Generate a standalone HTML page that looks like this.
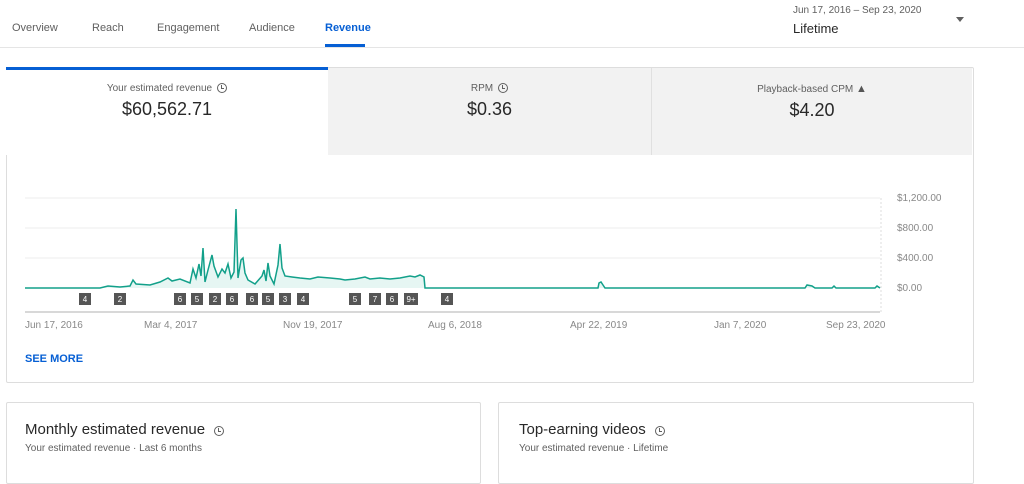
<!DOCTYPE html>
<html><head><style>
body{margin:0;width:1024px;height:470px;overflow:hidden;background:#fff;font-family:"Liberation Sans",sans-serif;position:relative;color:#282828}
.a{position:absolute}
.tab{position:absolute;top:22px;font-size:11px;color:#606060}
.card{position:absolute;border:1px solid #ddd;border-radius:2px;background:#fff}
.lbl{font-size:10px;color:#606060;text-align:center}
.val{font-size:18px;color:#282828;text-align:center;margin-top:5px}
.clk{display:inline-block;width:8px;height:8px;border:1px solid #606060;border-radius:50%;vertical-align:-2px;margin-left:5px;position:relative}
.clk:after{content:"";position:absolute;left:3px;top:1px;width:2px;height:3px;border-left:1px solid #606060;border-bottom:1px solid #606060}
.ax{font-size:10px;color:#888;position:absolute}
</style></head><body>
<div class="tab" style="left:12px">Overview</div>
<div class="tab" style="left:92px">Reach</div>
<div class="tab" style="left:157px">Engagement</div>
<div class="tab" style="left:249px">Audience</div>
<div class="tab" style="left:325px;color:#065fd4;font-weight:bold">Revenue</div>
<div class="a" style="left:325px;top:44px;width:40px;height:3px;background:#065fd4"></div>
<div class="a" style="left:0;top:47px;width:1024px;height:1px;background:#e5e5e5"></div>
<div class="a" style="left:793px;top:5px;font-size:10px;color:#606060">Jun 17, 2016 – Sep 23, 2020</div>
<div class="a" style="left:793px;top:21px;font-size:13px;color:#282828">Lifetime</div>
<div class="a" style="left:956px;top:17px;width:0;height:0;border-left:4px solid transparent;border-right:4px solid transparent;border-top:5px solid #606060"></div>

<div class="card" style="left:6px;top:67px;width:966px;height:314px"></div>
<div class="a" style="left:6px;top:67px;width:322px;height:88px;border-top:3px solid #065fd4;box-sizing:border-box;background:#fff"></div>
<div class="a" style="left:328px;top:68px;width:644px;height:87px;background:#f2f2f2"></div>
<div class="a" style="left:651px;top:68px;width:1px;height:87px;background:#e0e0e0"></div>
<div class="a" style="left:6px;top:83px;width:322px"><div class="lbl">Your estimated revenue<span class="clk"></span></div><div class="val">$60,562.71</div></div>
<div class="a" style="left:328px;top:83px;width:323px"><div class="lbl">RPM<span class="clk"></span></div><div class="val">$0.36</div></div>
<div class="a" style="left:652px;top:83px;width:320px"><div class="lbl">Playback-based CPM <span style="font-size:11px;color:#555">▲</span></div><div class="val">$4.20</div></div>

<svg class="a" style="left:0;top:180px" width="1024" height="160">
<g stroke="#eee" stroke-width="1"><line x1="25" y1="18" x2="880" y2="18"/><line x1="25" y1="48" x2="880" y2="48"/><line x1="25" y1="78" x2="880" y2="78"/></g>
<line x1="881" y1="18" x2="881" y2="132" stroke="#ddd" stroke-dasharray="2,2"/>
<line x1="25" y1="132" x2="880" y2="132" stroke="#ccc" stroke-width="1.5"/>
<path d="M25 108 L100 108 L108 106 L120 107 L130 106 L133 100 L136 104 L150 105 L160 102 L168 98 L172 101 L180 99 L190 103 L193 89 L196 98 L199 84 L201 96 L203 68 L205 102 L208 90 L212 75 L214 86 L218 97 L222 89 L225 93 L228 84 L231 98 L234 92 L236 29 L238 98 L241 80 L243 78 L245 93 L248 100 L255 104 L262 96 L264 90 L266 101 L268 83 L270 96 L274 104 L278 85 L280 64 L282 88 L285 96 L292 97 L300 98 L310 99 L318 97 L330 98 L340 99 L345 100 L355 99 L365 97 L370 99 L380 98 L390 99 L400 98 L410 96 L415 97 L420 95 L424 97 L425 108 L598 108 L599 103 L601 102 L603 105 L605 108 L805 108 L807 105 L812 106 L815 108 L832 108 L834 106 L836 108 L875 108 L877 106 L880 108 Z" fill="#e6f6f3" stroke="none"/>
<path d="M25 108 L100 108 L108 106 L120 107 L130 106 L133 100 L136 104 L150 105 L160 102 L168 98 L172 101 L180 99 L190 103 L193 89 L196 98 L199 84 L201 96 L203 68 L205 102 L208 90 L212 75 L214 86 L218 97 L222 89 L225 93 L228 84 L231 98 L234 92 L236 29 L238 98 L241 80 L243 78 L245 93 L248 100 L255 104 L262 96 L264 90 L266 101 L268 83 L270 96 L274 104 L278 85 L280 64 L282 88 L285 96 L292 97 L300 98 L310 99 L318 97 L330 98 L340 99 L345 100 L355 99 L365 97 L370 99 L380 98 L390 99 L400 98 L410 96 L415 97 L420 95 L424 97 L425 108 L598 108 L599 103 L601 102 L603 105 L605 108 L805 108 L807 105 L812 106 L815 108 L832 108 L834 106 L836 108 L875 108 L877 106 L880 108" fill="none" stroke="#12a08a" stroke-width="1.5"/>
<g font-family="Liberation Sans" font-size="8" fill="#fff" text-anchor="middle">
<g fill="#555"><rect x="79" y="113" width="12" height="12"/><rect x="114" y="113" width="12" height="12"/><rect x="174" y="113" width="12" height="12"/><rect x="191" y="113" width="12" height="12"/><rect x="209" y="113" width="12" height="12"/><rect x="226" y="113" width="12" height="12"/><rect x="246" y="113" width="12" height="12"/><rect x="262" y="113" width="12" height="12"/><rect x="279" y="113" width="12" height="12"/><rect x="297" y="113" width="12" height="12"/><rect x="349" y="113" width="12" height="12"/><rect x="369" y="113" width="12" height="12"/><rect x="386" y="113" width="12" height="12"/><rect x="404" y="113" width="14" height="12"/><rect x="441" y="113" width="12" height="12"/></g>
<text x="85" y="122">4</text><text x="120" y="122">2</text><text x="180" y="122">6</text><text x="197" y="122">5</text><text x="215" y="122">2</text><text x="232" y="122">6</text><text x="252" y="122">6</text><text x="268" y="122">5</text><text x="285" y="122">3</text><text x="303" y="122">4</text><text x="355" y="122">5</text><text x="375" y="122">7</text><text x="392" y="122">6</text><text x="411" y="122">9+</text><text x="447" y="122">4</text>
</g>
</svg>
<div class="ax" style="left:897px;top:193px">$1,200.00</div>
<div class="ax" style="left:897px;top:223px">$800.00</div>
<div class="ax" style="left:897px;top:253px">$400.00</div>
<div class="ax" style="left:897px;top:283px">$0.00</div>
<div class="ax" style="left:25px;top:320px">Jun 17, 2016</div>
<div class="ax" style="left:144px;top:320px">Mar 4, 2017</div>
<div class="ax" style="left:283px;top:320px">Nov 19, 2017</div>
<div class="ax" style="left:428px;top:320px">Aug 6, 2018</div>
<div class="ax" style="left:570px;top:320px">Apr 22, 2019</div>
<div class="ax" style="left:714px;top:320px">Jan 7, 2020</div>
<div class="ax" style="left:826px;top:320px">Sep 23, 2020</div>
<div class="a" style="left:25px;top:353px;font-size:11px;font-weight:bold;color:#065fd4">SEE MORE</div>

<div class="card" style="left:6px;top:402px;width:473px;height:80px"></div>
<div class="card" style="left:498px;top:402px;width:474px;height:80px"></div>
<div class="a" style="left:25px;top:421px;font-size:15px;color:#282828">Monthly estimated revenue<span class="clk" style="margin-left:9px"></span></div>
<div class="a" style="left:25px;top:443px;font-size:10px;color:#606060">Your estimated revenue · Last 6 months</div>
<div class="a" style="left:519px;top:421px;font-size:15px;color:#282828">Top-earning videos<span class="clk" style="margin-left:9px"></span></div>
<div class="a" style="left:519px;top:443px;font-size:10px;color:#606060">Your estimated revenue · Lifetime</div>
</body></html>
